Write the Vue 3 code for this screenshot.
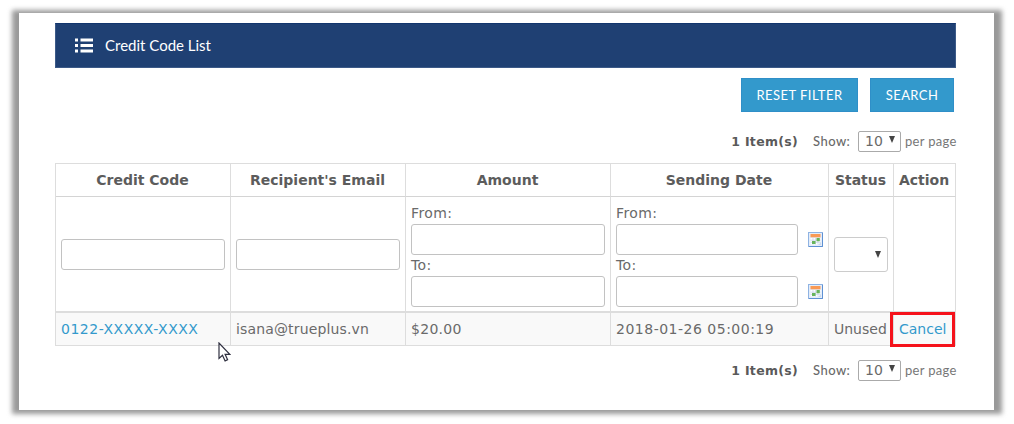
<script setup>
const columns = ["Credit Code", "Recipient's Email", 'Amount', 'Sending Date', 'Status', 'Action']
const row = { code: '0122-XXXXX-XXXX', email: 'isana@trueplus.vn', amount: '$20.00', date: '2018-01-26 05:00:19', status: 'Unused' }
const range = ['From:', 'To:']
</script>

<template>
  <div class="page">
    <main class="panel">
      <header class="title">
        <svg class="list-icon" width="18" height="15" viewBox="0 0 18 15" fill="#fff">
          <path d="M0 .5h3v3H0zM5.500 .5h12.500v3H5.500zM0 6h3v3H0zM5.500 6h12.500v3H5.500zM0 11.500h3v3H0zM5.500 11.500h12.500v3H5.500z" />
        </svg>
        <h1><span>Credit Code List</span></h1>
      </header>
      <div class="buttons">
        <button class="reset"><span>RESET FILTER</span></button>
        <button class="search"><span>SEARCH</span></button>
      </div>
      <div class="pager top">
        <b>1 Item(s)</b><span class="show">Show:</span>
        <div class="select size"><span>10</span><svg width="6" height="7"><path d="M0 0h6L3 7z" /></svg></div>
        <span class="per">per page</span>
      </div>
      <table>
        <colgroup><col class="c1" /><col class="c1" /><col class="c3" /><col class="c4" /><col class="c5" /><col class="c6" /></colgroup>
        <thead>
          <tr class="head"><th v-for="c in columns" :key="c"><span>{{ c }}</span></th></tr>
        </thead>
        <tbody>
          <tr class="filters">
            <td><input /></td>
            <td><input /></td>
            <td>
              <div v-for="r in range" :key="r" class="range"><label>{{ r }}</label><input /></div>
            </td>
            <td>
              <div v-for="r in range" :key="r" class="range">
                <label>{{ r }}</label>
                <div class="date">
                  <input />
                  <svg width="15" height="15" viewBox="0 0 15 15">
                    <rect x=".5" y=".5" width="14" height="14" fill="#e4edf9" stroke="#8fb3e3" />
                    <path d="M14.5 1v13.5H1" fill="none" stroke="#5f91d3" />
                    <rect x="2.500" y="2" width="10" height="3.300" fill="#f99a55" />
                    <path d="M2.500 6h10v6.500h-10z" fill="#fff" />
                    <path d="M2.500 8.200h10M2.500 10.400h10M5 6v6.500M7.500 6v6.500M10 6v6.500" stroke="#c5d3e7" stroke-width=".7" />
                    <path d="M8.500 6h3.300v3.200H8.500zM4 9h3.500v3H4z" fill="#68b45b" />
                    <path d="M10 13l3-3v3z" fill="#cbd9ed" />
                  </svg>
                </div>
              </div>
            </td>
            <td><div class="select status"><svg width="6" height="7"><path d="M0 0h6L3 7z" /></svg></div></td>
            <td></td>
          </tr>
          <tr class="data">
            <td class="code"><a>{{ row.code }}</a></td>
            <td class="email">{{ row.email }}</td>
            <td class="amount">{{ row.amount }}</td>
            <td class="sent">{{ row.date }}</td>
            <td class="state">{{ row.status }}</td>
            <td class="action"><a>Cancel</a><i class="highlight"></i></td>
          </tr>
        </tbody>
      </table>
      <div class="pager bottom">
        <b>1 Item(s)</b><span class="show">Show:</span>
        <div class="select size"><span>10</span><svg width="6" height="7"><path d="M0 0h6L3 7z" /></svg></div>
        <span class="per">per page</span>
      </div>
      <svg class="cursor" width="13" height="20" viewBox="0 0 13 20">
        <path d="M1 1v15.500l3.500-3.200 2.600 5.600 2.500-1.200-2.500-5.400h4.700z" fill="#fff" stroke="#2f3040" stroke-width="1.200" />
      </svg>
    </main>
  </div>
</template>

<style>
body { margin: 0; background: #fff; }
</style>

<style scoped>
* { box-sizing: border-box; }
.page { position: relative; width: 1014px; height: 424px; padding: 13px 20px 14px 19px; overflow: hidden; background: #fff; font-family: "DejaVu Sans", Verdana, sans-serif; font-size: 14px; color: #6a6a6a; }
.page::before { content: ""; position: absolute; inset: 10px 12px 10px 12px; background: #999; filter: blur(2.5px); }
.panel { position: relative; height: 397px; padding: 10px 38px 0 36px; background: #fff; }
.title { display: flex; align-items: center; height: 45px; padding-left: 19px; background: #1f4073; border: 1px solid #3c5a88; border-top-color: #12356d; color: #fff; }
h1 { margin: -2px 0 0 12px; font: 400 15px Lato, sans-serif; white-space: nowrap; }
.buttons { display: flex; justify-content: flex-end; gap: 12px; padding: 10px 2px 0 0; }
button { height: 34px; padding: 0; border: 1px solid #2f8fc8; background: #3399cc; color: #fff; font: 400 13px Lato, sans-serif; white-space: nowrap; }
.reset { width: 117px; letter-spacing: .45px; }
.search { width: 84px; letter-spacing: .4px; }
.pager { display: flex; align-items: center; justify-content: flex-end; height: 22px; white-space: nowrap; }
.top { margin-top: 18px; }
.bottom { margin-top: 13px; }
.pager b { font-size: 12.500px; letter-spacing: .3px; color: #5a5a5a; }
.show { margin-left: 15px; width: 45px; font: 500 13px Lato, sans-serif; letter-spacing: .45px; }
.per { margin-left: 4px; width: 51px; font: 400 13px Lato, sans-serif; letter-spacing: .3px; color: #777; }
.select { display: flex; align-items: center; border: 1px solid #aaa; border-radius: 2px; background: #fff; }
.select svg { fill: #444; }
.size { width: 43px; height: 21px; padding-left: 6px; gap: 6px; }
.size svg { margin-top: -3px; }
table { width: 901px; margin-top: 11px; table-layout: fixed; border-spacing: 0; border: solid #ddd; border-width: 1px 0 0 1px; }
.c1 { width: 175px; } .c3 { width: 205px; } .c4 { width: 218px; } .c5 { width: 65px; } .c6 { width: 62px; }
th, td { padding: 0 5px; border: solid #ddd; border-width: 0 1px 1px 0; white-space: nowrap; text-align: left; vertical-align: middle; }
.head { height: 33px; }
th { padding: 0 1px 0 0; text-align: center; color: #5c5c5c; font-size: 14px; }
.head th { border-bottom-color: #d4d4d4; }
.filters { height: 116px; }
.filters td { border-bottom: 2px solid #ddd; }
.data { height: 33px; background: #f9f9f9; }
.code, .sent { letter-spacing: .5px; }
.email { letter-spacing: .15px; }
.amount { letter-spacing: .3px; }
.range label { letter-spacing: .4px; }
a { color: #3399cc; }
input { display: block; width: 100%; height: 31px; padding: 0; border: 1px solid #c2c2c2; border-radius: 3px; background: #fff; }
.range label { display: block; height: 21px; line-height: 21px; }
.range:first-child { padding-top: 1px; }
.date { display: flex; align-items: center; gap: 10px; }
.date input { width: 182px; flex: none; }
.date svg { flex: none; }
.status { width: 54px; height: 35px; justify-content: flex-end; padding-right: 6px; border-color: #ccc; border-radius: 3px; }
.action { position: relative; }
.highlight { position: absolute; left: -4px; top: -1px; width: 65px; height: 35px; border: 3px solid #f5121b; }
.cursor { position: absolute; left: 199px; top: 329px; }
</style>
